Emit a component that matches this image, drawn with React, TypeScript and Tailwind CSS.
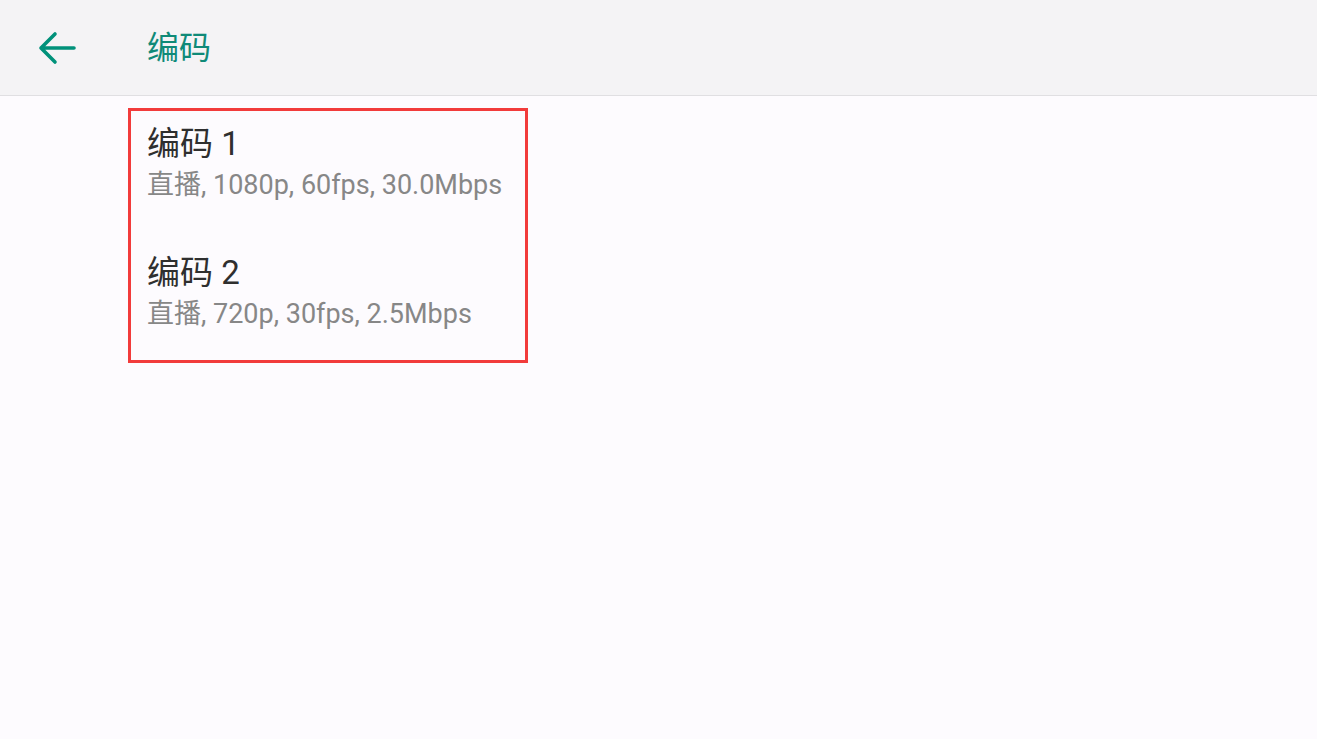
const encoders = [
  { name: "编码 1", detail: "直播, 1080p, 60fps, 30.0Mbps" },
  { name: "编码 2", detail: "直播, 720p, 30fps, 2.5Mbps" },
];

function BackArrow() {
  return (
    <svg width="40" height="36" viewBox="0 0 40 36" fill="none" className="text-[#00917a]">
      <path
        d="M17 4 L3 18 L17 32 M3 18 H36"
        stroke="currentColor"
        strokeWidth="3.6"
        strokeLinecap="round"
        strokeLinejoin="round"
      />
    </svg>
  );
}

export default function App() {
  return (
    <div
      className="w-[1317px] h-[739px] bg-[#fdfbfe] flex flex-col"
      style={{ fontFamily: '"Roboto", "Noto Sans CJK SC", sans-serif' }}
    >
      <header className="h-[96px] bg-[#f4f3f5] border-b border-[#e0dfe2] flex items-center shrink-0">
        <div className="w-[147px] pl-[38px] pt-[1px]">
          <BackArrow />
        </div>
        <h1 className="text-[32px] text-[#0f8a78] leading-none">编码</h1>
      </header>
      <div className="pl-[128px] pt-[12px]">
        <div className="w-[400px] h-[255px] border-[3px] border-[#f23b3b] pl-[16px]">
          {encoders.map((e, i) => (
            <div key={e.name} className={i === 0 ? "h-[129px] pt-[13px]" : "pt-[13px]"}>
              <div className="text-[33px] leading-[40px] text-[#2f2f2f]">{e.name}</div>
              <div className="mt-[3px] text-[27px] leading-[36px] text-[#878787]">{e.detail}</div>
            </div>
          ))}
        </div>
      </div>
    </div>
  );
}
